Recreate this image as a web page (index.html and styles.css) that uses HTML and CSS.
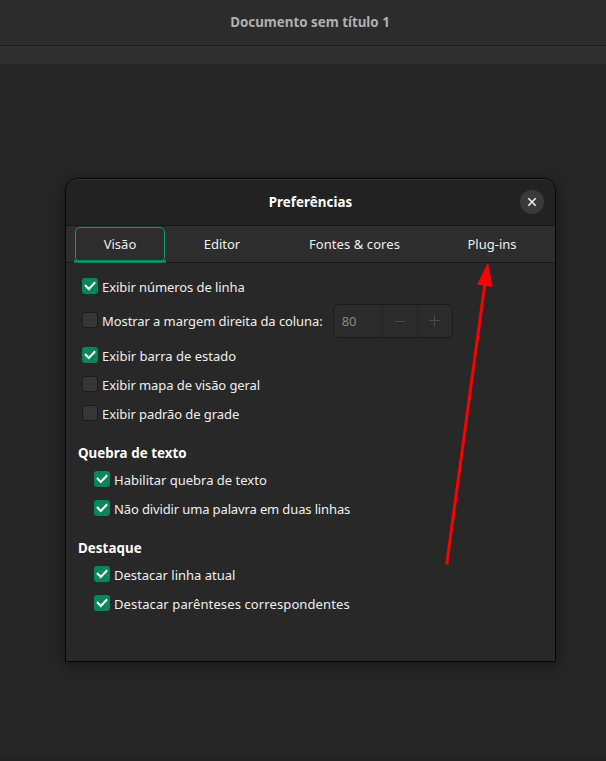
FILE: index.html
```
<!DOCTYPE html>
<html lang="pt-BR">
<head>
<meta charset="utf-8">
<title>Preferências</title>
<link rel="stylesheet" href="styles.css">
</head>
<body>
<svg class="symbols" aria-hidden="true"><symbol id="check" viewBox="0 0 16 16"><path d="M3 7.1 6.8 10.9 13.2 4.3" fill="none" stroke="#fff" stroke-width="2.1"/></symbol></svg>
<div class="window">
  <header class="titlebar">Documento sem título 1</header>
  <div class="tabstrip"></div>
  <main class="workspace">
    <section class="dialog">
      <header class="dialog-header">
        <h1>Preferências</h1>
        <button class="close" aria-label="Fechar"><svg width="10" height="10" viewBox="0 0 10 10"><path d="M1.3 1.3 8.7 8.7M8.7 1.3 1.3 8.7" stroke="#eeeeec" stroke-width="1.6"/></svg></button>
      </header>
      <nav class="tabs">
        <a class="tab active"><span>Visão</span></a>
        <a class="tab">Editor</a>
        <a class="tab wide">Fontes &amp; cores</a>
        <a class="tab">Plug-ins</a>
      </nav>
      <div class="content">
        <div class="row"><span class="box on"><svg><use href="#check"/></svg></span><span class="label snug">Exibir números de linha</span></div>
        <div class="row tall"><span class="box"></span><span class="label snug">Mostrar a margem direita da coluna:</span>
          <div class="spin"><span class="value">80</span><span class="step"><svg width="12" height="12"><path d="M1 6.5H11" stroke="#4b4b4b"/></svg></span><span class="step"><svg width="12" height="12"><path d="M0 5.5H11M5.5 0V11" stroke="#4b4b4b"/></svg></span></div>
        </div>
        <div class="row"><span class="box on"><svg><use href="#check"/></svg></span><span class="label">Exibir barra de estado</span></div>
        <div class="row"><span class="box"></span><span class="label snug">Exibir mapa de visão geral</span></div>
        <div class="row"><span class="box"></span><span class="label snug">Exibir padrão de grade</span></div>
        <h2>Quebra de texto</h2>
        <div class="group">
          <div class="row"><span class="box on"><svg><use href="#check"/></svg></span><span class="label">Habilitar quebra de texto</span></div>
          <div class="row"><span class="box on"><svg><use href="#check"/></svg></span><span class="label tight">Não dividir uma palavra em duas linhas</span></div>
        </div>
        <h2>Destaque</h2>
        <div class="group">
          <div class="row"><span class="box on"><svg><use href="#check"/></svg></span><span class="label">Destacar linha atual</span></div>
          <div class="row"><span class="box on"><svg><use href="#check"/></svg></span><span class="label loose">Destacar parênteses correspondentes</span></div>
        </div>
      </div>
    </section>
  </main>
  <footer class="statusbar"></footer>
  <svg class="arrow" viewBox="0 0 606 761"><path d="M446.7 564.5 485 283" stroke="#f00" stroke-width="3" fill="none"/><path d="M488 262.5 492.6 286.8 477 284.8Z" fill="#f00"/></svg>
</div>
</body>
</html>
```

FILE: styles.css
```
* { box-sizing: border-box; }
body {
  margin: 0;
  background: #262626;
  color: #eeeeec;
  font: 13px/18px "Noto Sans", sans-serif;
}
.symbols { display: none; }
.window {
  position: relative;
  display: flex;
  flex-direction: column;
  width: 606px;
  height: 761px;
  overflow: hidden;
}
.titlebar {
  height: 46px;
  padding: 13px 0 0 14px;
  background: #2c2c2c;
  border-bottom: 1px solid #1b1b1b;
  color: #b0b0af;
  font-size: 13.333px;
  font-weight: 700;
  text-align: center;
}
.tabstrip { height: 18px; background: #303030; }
.workspace { flex: 1; padding: 114px 0 0 65px; }
.statusbar { height: 5px; background: #232323; }
.dialog {
  width: 491px;
  height: 484px;
  border: 1px solid #070707;
  border-radius: 13px 13px 0 0;
  background: #282828;
  overflow: hidden;
  box-shadow: 0 3px 14px 1px rgba(0, 0, 0, .4);
}
.dialog-header {
  display: grid;
  grid-template-columns: 1fr auto 1fr;
  align-items: center;
  height: 47px;
  padding: 0 11px;
  background: #222;
  border-bottom: 1px solid #171717;
  border-radius: 12px 12px 0 0;
  box-shadow: inset 0 1px #323232;
}
h1, h2 {
  margin: 0;
  font-size: 13.333px;
  line-height: 18px;
  letter-spacing: .06px;
  color: #fff;
}
h1 { grid-column: 2; }
.close {
  justify-self: end;
  display: flex;
  align-items: center;
  justify-content: center;
  width: 24px;
  height: 24px;
  padding: 0;
  border: 0;
  border-radius: 50%;
  background: #3a3a3a;
}
.tabs {
  display: grid;
  grid-template-columns: 92px 112px 153px 122px;
  height: 37px;
  padding-left: 8px;
  background: #2d2d2d;
  border-bottom: 1px solid #191919;
}
.tab { display: flex; justify-content: center; padding-top: 9px; }
.tab.wide { letter-spacing: .08px; }
.tab.active {
  height: 37px;
  padding: 1px 1px 0;
  background: linear-gradient(#0d8559, #0d8559) 0 100% / 100% 3px no-repeat;
}
.tab.active span {
  width: 100%;
  height: 35px;
  padding-top: 7px;
  border: 1px solid #129a68;
  border-radius: 5px;
  text-align: center;
}
.content { padding: 9px 12px; }
.row { display: flex; align-items: center; height: 29px; padding-left: 4px; }
.row.tall { height: 40px; }
.label.snug { letter-spacing: -.08px; }
.label.tight { letter-spacing: -.13px; }
.label.loose { letter-spacing: .11px; }
.box {
  width: 16px;
  height: 16px;
  margin: -2px 4px 0 0;
  border: 1px solid #1b1b1b;
  border-radius: 3px;
  background: #363636;
}
.box.on { border: 0; background: #05875b; }
.box svg { display: block; width: 16px; height: 16px; }
.spin {
  display: flex;
  width: 120px;
  height: 34px;
  margin-left: 10px;
  border: 1px solid #1b1b1b;
  border-radius: 5px;
  background: #2b2b2b;
  color: #888886;
}
.value { width: 48px; padding: 7px 0 0 8px; }
.step {
  display: flex;
  align-items: center;
  justify-content: center;
  width: 35px;
  border-left: 1px solid #242424;
}
h2 { margin-top: 16px; }
.group { padding: 3px 0 0 12px; }
.arrow { position: absolute; inset: 0; width: 606px; height: 761px; }
```
